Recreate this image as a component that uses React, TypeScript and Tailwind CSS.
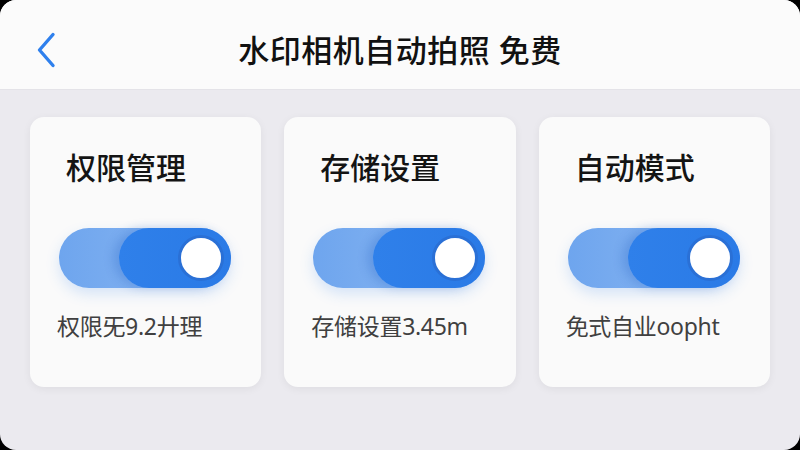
import React from 'react';

interface SettingCard {
  title: string;
  caption: string;
}

const cards: SettingCard[] = [
  { title: '权限管理', caption: '权限旡9.2廾理' },
  { title: '存储设置', caption: '存储设置3.45m' },
  { title: '自动模式', caption: '免式自业oopht' },
];

const Toggle: React.FC = () => (
  <div className="relative w-[172px] h-[60px] rounded-full bg-gradient-to-r from-[#6ea5ee] to-[#8fbaf2] shadow-[0_6px_14px_rgba(47,128,237,0.18)]">
    <div className="absolute right-0 top-0 h-full w-[112px] rounded-full bg-gradient-to-r from-[#2f80ea] to-[#2a7ae6] shadow-[-6px_0_10px_rgba(30,90,190,0.25)]" />
    <div className="absolute right-[7px] top-[7px] w-[46px] h-[46px] rounded-full bg-white border-[3px] border-[#2a70d6]" />
  </div>
);

export default function App() {
  return (
    <div className="w-[800px] h-[450px] bg-black" style={{ fontFamily: '"Noto Sans", "Noto Sans CJK SC", sans-serif' }}>
      <div className="w-full h-full rounded-[16px] overflow-hidden bg-[#ebeaef] flex flex-col">
        {/* Header */}
        <div className="relative h-[90px] bg-[#fbfbfb] border-b border-[#e4e3e8] flex items-center justify-center">
          <button className="absolute left-[34px] top-[32px] w-[24px] h-[36px] flex items-center justify-center">
            <svg width="22" height="36" viewBox="0 0 22 36" fill="none">
              <path d="M18 2.5 L4.5 18 L18 33.5" stroke="#2f80ed" strokeWidth="3.4" strokeLinecap="round" strokeLinejoin="round" />
            </svg>
          </button>
          <h1 className="text-[31px] font-medium text-[#111] tracking-[0.5px] leading-none mt-[12px]">
            水印相机自动拍照 免费
          </h1>
        </div>

        {/* Cards */}
        <div className="grid grid-cols-3 gap-[23px] px-[30px] pt-[27px]">
          {cards.map((card) => (
            <div
              key={card.title}
              className="h-[270px] rounded-[14px] bg-[#fafafa] shadow-[0_2px_8px_rgba(0,0,0,0.06)] flex flex-col pl-[29px]"
            >
              <div className="pt-[33px] pl-[7px] text-[30px] font-medium text-[#141414] leading-[36px]">
                {card.title}
              </div>
              <div className="mt-[42px]">
                <Toggle />
              </div>
              <div className="mt-[23px] -ml-[2px] text-[23px] text-[#404040] leading-[30px] tracking-[-0.3px]">
                {card.caption}
              </div>
            </div>
          ))}
        </div>
      </div>
    </div>
  );
}
